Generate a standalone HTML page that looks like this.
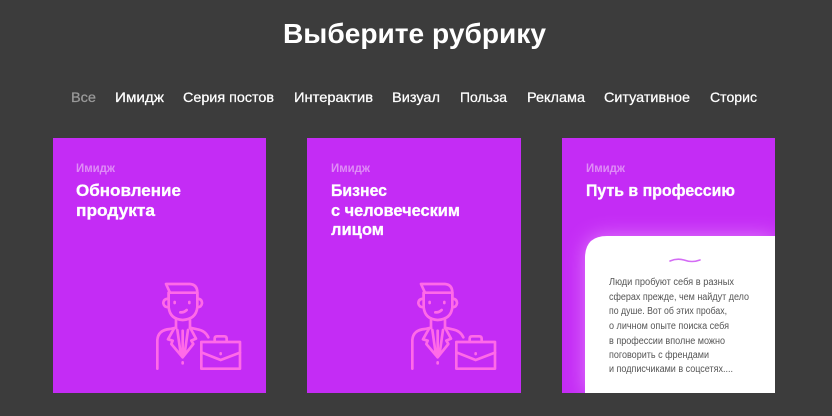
<!DOCTYPE html>
<html lang="ru"><head><meta charset="utf-8"><style>
html,body{margin:0;padding:0;background:#3c3c3c;width:832px;height:416px;overflow:hidden}
svg{display:block}
text{font-family:"Liberation Sans",sans-serif}
.n{font-size:14px;fill:#fff;stroke:#fff;stroke-width:.25px}
.t{font-size:16.5px;font-weight:bold;fill:#fff;stroke:#fff;stroke-width:.3px}
.k{font-size:11.5px;font-weight:bold;fill:#df8cf6}
.b{font-size:10px;fill:#555}
.i{fill:none;stroke:#ff6ae8;stroke-width:8;stroke-linecap:round;stroke-linejoin:round}
</style></head><body>
<svg width="832" height="416" viewBox="0 0 832 416" xmlns="http://www.w3.org/2000/svg">
<defs>
<filter id="g" x="-30%" y="-30%" width="160%" height="160%"><feGaussianBlur stdDeviation="10"/></filter>
<clipPath id="c3"><rect x="562" y="138" width="213" height="255"/></clipPath>
<g id="man" class="i" transform="scale(.3333)">
<path d="M90 68 L78 42 H150 Q172 44 172 68 V84"/>
<path d="M90 68 H172"/>
<path d="M86 68 V84 M86 86 Q70 86 70 100 Q72 112 86 112"/>
<path d="M172 86 Q186 86 186 100 Q184 112 172 112"/>
<path d="M86 68 V112 Q90 148 128 150 Q168 148 172 112 V68"/>
<path d="M104 96 V99 M148 96 V99"/>
<path d="M121 127 Q132 128 140 120"/>
<path d="M108 150 V174 M150 150 V174"/>
<path d="M52 296 V210 Q54 180 90 177 L108 173 M150 173 L172 178 Q196 182 205 202"/>
<path d="M102 176 L84 208 L98 212 L94 222 L128 262 L160 222 L154 212 L168 206 L152 176"/>
<path d="M112 180 L122 250 M128 182 V256 M144 180 L134 250"/>
<path d="M128 277 V280"/>
<rect x="184" y="216" width="116" height="80"/>
<path d="M224 214 V206 Q224 199 231 199 H253 Q260 199 260 206 V214"/>
<path d="M186 248 L242 270 L300 248"/>
<path d="M242 250 V252"/>
</g>
</defs>

<rect width="832" height="416" fill="#3c3c3c"/>

<text x="283" y="43" font-size="28" font-weight="bold" fill="#fff" textLength="263" lengthAdjust="spacingAndGlyphs">Выберите рубрику</text>

<text class="n" x="71" y="102" style="fill:#9a9a9a;stroke:#9a9a9a" textLength="25" lengthAdjust="spacingAndGlyphs">Все</text>
<text class="n" x="115" y="102" textLength="49" lengthAdjust="spacingAndGlyphs">Имидж</text>
<text class="n" x="183" y="102" textLength="91" lengthAdjust="spacingAndGlyphs">Серия постов</text>
<text class="n" x="294" y="102" textLength="79" lengthAdjust="spacingAndGlyphs">Интерактив</text>
<text class="n" x="392" y="102" textLength="48" lengthAdjust="spacingAndGlyphs">Визуал</text>
<text class="n" x="460" y="102" textLength="47" lengthAdjust="spacingAndGlyphs">Польза</text>
<text class="n" x="527" y="102" textLength="58" lengthAdjust="spacingAndGlyphs">Реклама</text>
<text class="n" x="604" y="102" textLength="86" lengthAdjust="spacingAndGlyphs">Ситуативное</text>
<text class="n" x="710" y="102" textLength="47" lengthAdjust="spacingAndGlyphs">Сторис</text>

<rect x="53" y="138" width="213" height="255" fill="#c42cf5"/>
<text class="k" x="76" y="172" textLength="39" lengthAdjust="spacingAndGlyphs">Имидж</text>
<text class="t" x="76" y="196" textLength="105" lengthAdjust="spacingAndGlyphs">Обновление</text>
<text class="t" x="76" y="216" textLength="79" lengthAdjust="spacingAndGlyphs">продукта</text>
<use href="#man" transform="translate(140,270)"/>

<rect x="307" y="138" width="214" height="255" fill="#c42cf5"/>
<text class="k" x="331" y="172" textLength="39" lengthAdjust="spacingAndGlyphs">Имидж</text>
<text class="t" x="331" y="196" textLength="56" lengthAdjust="spacingAndGlyphs">Бизнес</text>
<text class="t" x="331" y="216" textLength="129" lengthAdjust="spacingAndGlyphs">с человеческим</text>
<text class="t" x="331" y="235" textLength="53" lengthAdjust="spacingAndGlyphs">лицом</text>
<use href="#man" transform="translate(395,270)"/>

<rect x="562" y="138" width="213" height="255" fill="#c42cf5"/>
<text class="k" x="586" y="172" textLength="39" lengthAdjust="spacingAndGlyphs">Имидж</text>
<text class="t" x="586" y="196" textLength="149" lengthAdjust="spacingAndGlyphs">Путь в профессию</text>
<g clip-path="url(#c3)">
<path d="M585 393 V258 Q585 236 607 236 H775 V393 Z" fill="#ee9bff" opacity=".7" filter="url(#g)"/>
<path d="M585 393 V258 Q585 236 607 236 H775 V393 Z" fill="#fff"/>
</g>
<path d="M670 261 Q677 258 684 260 Q692 263 700 260" fill="none" stroke="#d46cf5" stroke-width="1.6" stroke-linecap="round"/>
<text class="b" x="609" y="285" textLength="125" lengthAdjust="spacingAndGlyphs">Люди пробуют себя в разных</text>
<text class="b" x="609" y="300" textLength="140" lengthAdjust="spacingAndGlyphs">сферах прежде, чем найдут дело</text>
<text class="b" x="609" y="314" textLength="118" lengthAdjust="spacingAndGlyphs">по душе. Вот об этих пробах,</text>
<text class="b" x="609" y="329" textLength="120" lengthAdjust="spacingAndGlyphs">о личном опыте поиска себя</text>
<text class="b" x="609" y="344" textLength="116" lengthAdjust="spacingAndGlyphs">в профессии вполне можно</text>
<text class="b" x="609" y="358" textLength="100" lengthAdjust="spacingAndGlyphs">поговорить с френдами</text>
<text class="b" x="609" y="372" textLength="124" lengthAdjust="spacingAndGlyphs">и подписчиками в соцсетях....</text>
</svg>
</body></html>
